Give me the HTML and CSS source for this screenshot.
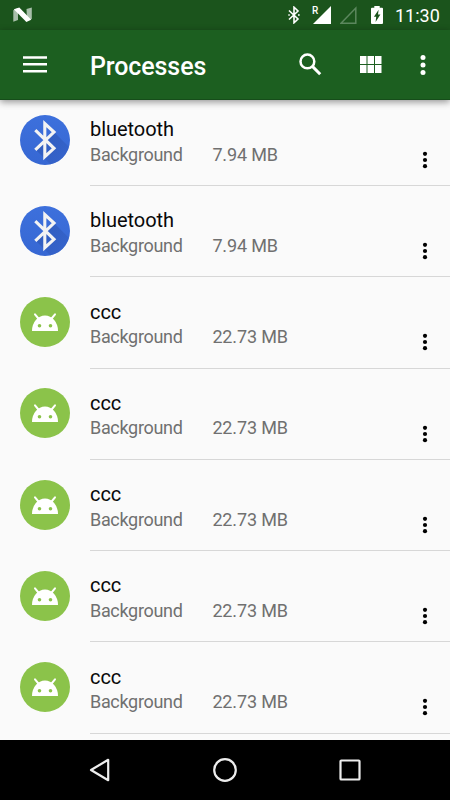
FILE: index.html
```html
<!DOCTYPE html>
<html lang="en">
<head>
<meta charset="utf-8">
<title>Processes</title>
<link rel="stylesheet" href="styles.css">
</head>
<body>
<svg class="defs" width="0" height="0" aria-hidden="true">
  <defs>
    <linearGradient id="blue" x1="0" y1="0" x2="0" y2="1"><stop offset="0" stop-color="#3d70dc"/><stop offset="1" stop-color="#3667d3"/></linearGradient>
    <linearGradient id="shade" x1="0" y1="0" x2="1" y2="1"><stop offset="0" stop-color="#2952ac"/><stop offset="1" stop-color="#3865cf"/></linearGradient>
    <clipPath id="disc"><circle cx="25" cy="25" r="25"/></clipPath>
  </defs>
  <symbol id="bluetooth" viewBox="0 0 50 50">
    <circle cx="25" cy="25" r="25" fill="url(#blue)"/>
    <path d="M34 17L54 37V54H35L15 34L25 25Z" fill="url(#shade)" opacity=".65" clip-path="url(#disc)"/>
    <path d="M15.3 15.2L34 33.3L24.8 41.7V8.5L34 17L15.3 34.8" fill="none" stroke="#f3f3f3" stroke-width="3.1"/>
  </symbol>
  <symbol id="android" viewBox="0 0 50 50">
    <circle cx="25" cy="25" r="25" fill="#8bc34a"/>
    <path d="M12 34A13 15.4 0 0 1 38 34Z" fill="#fff"/>
    <path d="M15 17.3L18.8 22M35 17.3L31.2 22" stroke="#fff" stroke-width="2" stroke-linecap="round"/>
    <circle cx="19.5" cy="28.7" r="1.8" fill="#8bc34a"/><circle cx="30.5" cy="28.7" r="1.8" fill="#8bc34a"/>
  </symbol>
  <symbol id="dots" viewBox="0 0 6 18">
    <circle cx="3" cy="2.8" r="2.1"/><circle cx="3" cy="9" r="2.1"/><circle cx="3" cy="15.2" r="2.1"/>
  </symbol>
</svg>
<div class="screen">
  <div class="status">
    <svg class="nougat" width="20" height="16" viewBox="0 0 20 16">
      <path d="M.3 3.2L5 1V13L.3 14.8ZM13.5 2L18.8.6V12L14 14Z" fill="#a8bfaa"/>
      <path d="M.8 2.2L6.3.4L18.2 12.7L13.4 15Z" fill="#fff"/>
    </svg>
    <svg class="bt" width="12" height="18" viewBox="0 0 12 18">
      <path d="M1 4.5L10 13L6 16.8V1.2L10 5L1 13.5" fill="none" stroke="#fff" stroke-width="1.6"/>
      <path d="M.3 9h1.5M10 9h1.7" stroke="#fff" stroke-width="1.6"/>
    </svg>
    <div class="signal"><span class="roaming">R</span><svg width="18" height="18" viewBox="0 0 18 18"><path d="M0 18L18 0V18Z" fill="#fff"/></svg></div>
    <svg class="nosignal" width="18" height="18" viewBox="0 0 18 18"><path d="M1 17.2L15.8 2V17.2Z" fill="none" stroke="#5c875e" stroke-width="1.5"/></svg>
    <svg class="battery" width="12" height="18" viewBox="0 0 12 18">
      <path d="M3.3 0H8.7V1.8H11Q12 1.8 12 2.8V17Q12 18 11 18H1Q0 18 0 17V2.8Q0 1.8 1 1.8H3.3Z" fill="#fff"/>
      <path d="M7.6 3.8L2.9 10.8H5.2L4.6 16L9.4 8.5H7Z" fill="#1b541c"/>
    </svg>
    <span class="time">11:30</span>
  </div>
  <header class="bar">
    <svg class="menu" width="24" height="17" viewBox="0 0 24 17" fill="#fff"><path d="M0 .2h24v2.5H0zM0 7.1h24v2.5H0zM0 14h24v2.5H0z"/></svg>
    <h1>Processes</h1>
    <svg class="search" width="23" height="23" viewBox="0 0 23 23" fill="none" stroke="#fff"><circle cx="8.4" cy="8.4" r="6.9" stroke-width="2.5"/><path d="M13.4 13.4L21.2 21.2" stroke-width="3"/></svg>
    <svg class="grid" width="22" height="17" viewBox="0 0 22 17" fill="#fff"><path d="M0 0h6.5v8H0zM7.5 0H14v8H7.5zM15 0h6.5v8H15zM0 9h6.5v8H0zM7.5 9H14v8H7.5zM15 9h6.5v8H15z"/></svg>
    <svg class="more" width="6" height="20" viewBox="0 0 6 20" fill="#fff"><circle cx="3" cy="2.6" r="2.5"/><circle cx="3" cy="10" r="2.5"/><circle cx="3" cy="17.4" r="2.5"/></svg>
  </header>
  <main class="list">
    <div class="row"><svg class="avatar"><use href="#bluetooth"/></svg><div class="info"><div class="name">bluetooth</div><div class="meta"><span class="kind">Background</span><span>7.94 MB</span></div><svg class="dots"><use href="#dots"/></svg></div></div>
    <div class="row"><svg class="avatar"><use href="#bluetooth"/></svg><div class="info"><div class="name">bluetooth</div><div class="meta"><span class="kind">Background</span><span>7.94 MB</span></div><svg class="dots"><use href="#dots"/></svg></div></div>
    <div class="row"><svg class="avatar"><use href="#android"/></svg><div class="info"><div class="name">ccc</div><div class="meta"><span class="kind">Background</span><span>22.73 MB</span></div><svg class="dots"><use href="#dots"/></svg></div></div>
    <div class="row"><svg class="avatar"><use href="#android"/></svg><div class="info"><div class="name">ccc</div><div class="meta"><span class="kind">Background</span><span>22.73 MB</span></div><svg class="dots"><use href="#dots"/></svg></div></div>
    <div class="row"><svg class="avatar"><use href="#android"/></svg><div class="info"><div class="name">ccc</div><div class="meta"><span class="kind">Background</span><span>22.73 MB</span></div><svg class="dots"><use href="#dots"/></svg></div></div>
    <div class="row"><svg class="avatar"><use href="#android"/></svg><div class="info"><div class="name">ccc</div><div class="meta"><span class="kind">Background</span><span>22.73 MB</span></div><svg class="dots"><use href="#dots"/></svg></div></div>
    <div class="row"><svg class="avatar"><use href="#android"/></svg><div class="info"><div class="name">ccc</div><div class="meta"><span class="kind">Background</span><span>22.73 MB</span></div><svg class="dots"><use href="#dots"/></svg></div></div>
  </main>
  <nav class="nav">
    <svg width="24" height="26" viewBox="0 0 24 26"><path d="M3 13L20.2 2.8V23.2Z"/></svg>
    <svg width="24" height="26" viewBox="0 0 24 26"><circle cx="12" cy="13" r="10.8"/></svg>
    <svg width="24" height="26" viewBox="0 0 24 26"><rect x="2.5" y="3.5" width="19" height="19" rx=".8"/></svg>
  </nav>
</div>
</body>
</html>
```
FILE: styles.css
```css
* { box-sizing: border-box; }
body { margin: 0; font-family: Roboto, "Liberation Sans", sans-serif; }
svg { display: block; flex: none; }
.defs { position: absolute; }
.screen { width: 450px; height: 800px; display: flex; flex-direction: column; overflow: hidden; background: #fafafa; }
.status { height: 30px; flex: none; display: flex; align-items: center; padding: 0 11px 0 13px; background: #1b541c; color: #fff; }
.nougat { margin-right: auto; }
.bt { margin-right: 13px; }
.signal { position: relative; margin-right: 9px; }
.roaming { position: absolute; left: -1px; top: 0; font-size: 10px; line-height: 9px; font-weight: 500; }
.nosignal { margin-right: 13px; }
.battery { margin-right: 12px; }
.time { width: 44px; font-size: 18px; line-height: 30px; white-space: nowrap; padding-top: 1px; }
.bar { position: relative; z-index: 1; height: 70px; flex: none; display: flex; align-items: center; padding: 0 24px 0 23px; background: #1c5f20; border-bottom: 1px solid #164d1a; color: #fff; box-shadow: 0 2px 7px rgba(0,0,0,.42); }
.menu { margin-right: 43px; }
h1 { margin: 4px auto 0 0; font-size: 25px; line-height: 30px; font-weight: 500; letter-spacing: -.1px; }
.search { margin-right: 38px; }
.grid { margin-right: 38px; }
.list { flex: 1; min-height: 0; margin-top: -5.25px; overflow: hidden; }
.row { height: 91.25px; display: flex; padding-left: 20px; }
.avatar { width: 50px; height: 50px; margin: 19.95px 20px 0 0; }
.info { flex: 1; display: grid; grid-template-columns: 1fr 6px; align-content: start; padding: 22.25px 22px 0 0; border-bottom: 1px solid #d7d7d7; }
.name { grid-column: 1 / 3; font-size: 20px; line-height: 24px; letter-spacing: -.05px; color: #090909; }
.meta { display: flex; font-size: 18px; line-height: 26px; padding-top: .6px; letter-spacing: -.15px; color: #707070; }
.kind { width: 122.4px; letter-spacing: -.32px; }
.dots { width: 6px; height: 18px; margin-top: 9.9px; }
.nav { height: 60px; flex: none; display: flex; justify-content: center; align-items: center; gap: 101px; background: #000; }
.nav svg { fill: none; stroke: #ededed; stroke-width: 2.2; stroke-linejoin: round; }
```
